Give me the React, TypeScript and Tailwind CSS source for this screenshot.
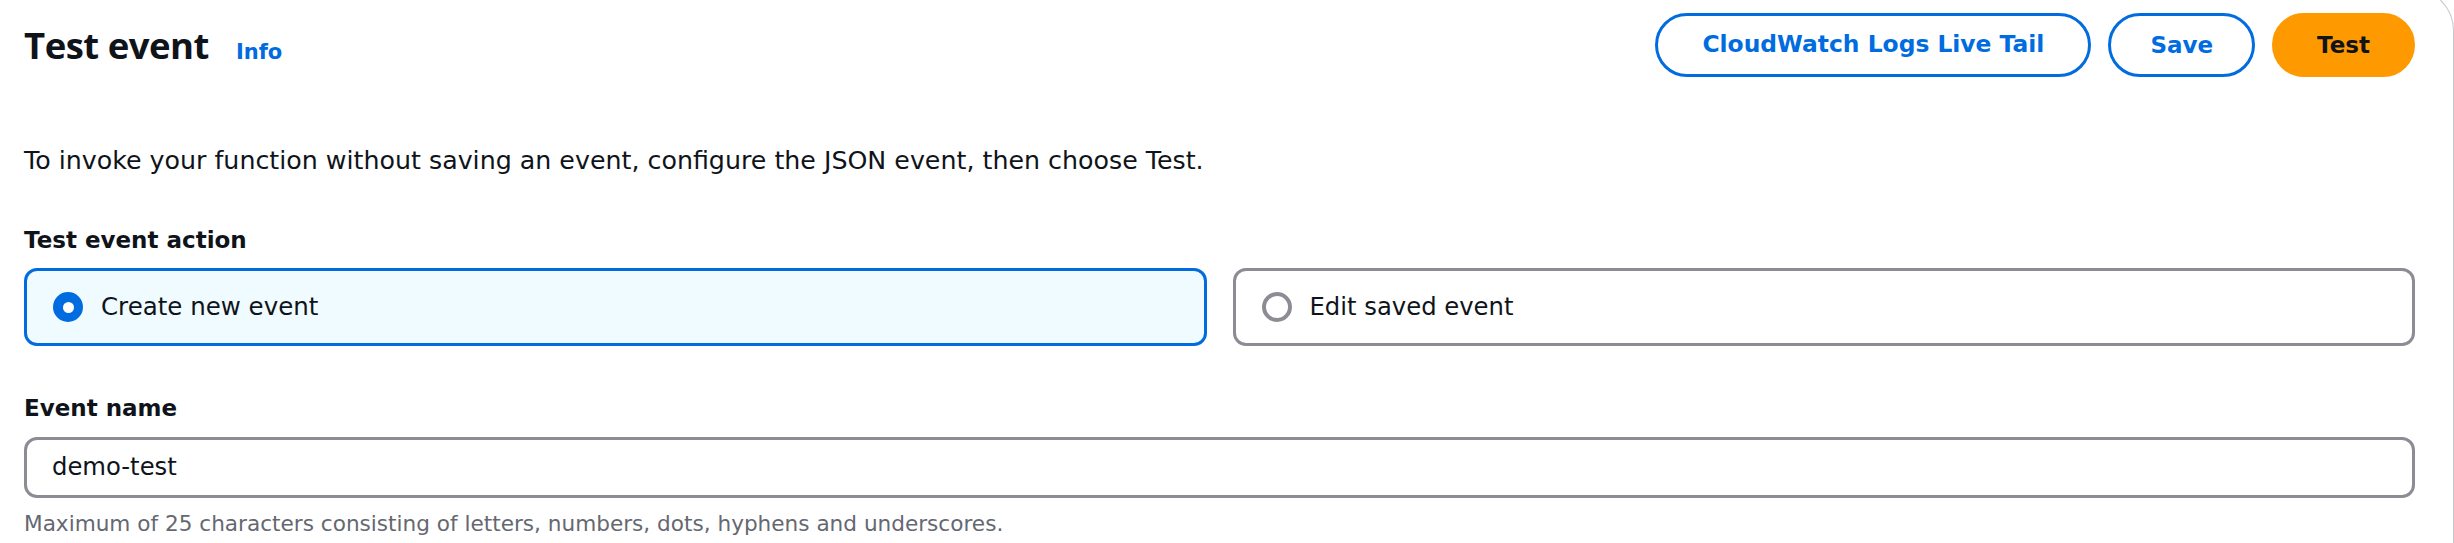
import React from "react";

const body = { fontFamily: '"DejaVu Sans", "Open Sans", Arial, sans-serif' };
const heading = { fontFamily: '"Open Sans", "Noto Sans", Arial, sans-serif' };

function Radio({ checked }: { checked: boolean }) {
  return checked ? (
    <span className="flex h-[30px] w-[30px] shrink-0 items-center justify-center rounded-full bg-[#006ce0]">
      <span className="h-[11px] w-[11px] rounded-full bg-white" />
    </span>
  ) : (
    <span className="h-[30px] w-[30px] shrink-0 rounded-full border-[4px] border-[#8c8c94] bg-white" />
  );
}

export default function App() {
  return (
    <div className="h-[543px] w-full overflow-hidden bg-white" style={body}>
      <div className="mt-[-11px] h-[600px] rounded-tr-[41px] border-r border-t border-[#c6c6cd]">
        <div className="pl-[24px] pr-[38px] pt-[23px]">
          <div className="flex items-center justify-between">
            <div className="flex items-baseline gap-[27px]">
              <h1 className="text-[36.5px] font-bold leading-[64px] tracking-[-0.5px] text-[#0f141a]" style={heading}>
                Test event
              </h1>
              <a className="text-[21px] font-bold text-[#006ce0]">Info</a>
            </div>
            <div className="flex items-center gap-[17px]">
              <button className="h-[64px] rounded-full border-[3px] border-[#006ce0] px-[44px] text-[23.4px] font-bold text-[#006ce0]">
                CloudWatch Logs Live Tail
              </button>
              <button className="h-[64px] rounded-full border-[3px] border-[#006ce0] px-[39px] text-[23px] font-bold text-[#006ce0]">
                Save
              </button>
              <button className="h-[64px] rounded-full border-[3px] border-[#ff9900] bg-[#ff9900] px-[42px] text-[23px] font-bold text-[#0f141a]">
                Test
              </button>
            </div>
          </div>

          <p className="mt-[68px] text-[25.3px] leading-[32px] text-[#0f141a]">
            To invoke your function without saving an event, configure the JSON event, then choose Test.
          </p>

          <div className="mt-[47px] text-[23px] font-bold leading-[32px] text-[#0f141a]">Test event action</div>
          <div className="mt-[12px] grid grid-cols-2 gap-[26px]">
            <div className="flex h-[78px] items-center gap-[18px] rounded-[13px] border-[3px] border-[#006ce0] bg-[#f0fbff] pl-[26px]">
              <Radio checked />
              <span className="text-[24.5px] text-[#0f141a]">Create new event</span>
            </div>
            <div className="flex h-[78px] items-center gap-[18px] rounded-[13px] border-[3px] border-[#8c8c94] bg-white pl-[26px]">
              <Radio checked={false} />
              <span className="text-[24.3px] text-[#0f141a]">Edit saved event</span>
            </div>
          </div>

          <div className="mt-[46px] text-[23px] font-bold leading-[32px] text-[#0f141a]">Event name</div>
          <div className="mt-[13px] flex h-[61px] items-center rounded-[13px] border-[3px] border-[#8c8c94] bg-white pl-[25px]">
            <span className="text-[24.3px] text-[#0f141a]">demo-test</span>
          </div>
          <p className="mt-[12px] text-[21.6px] leading-[28px] text-[#656871]">
            Maximum of 25 characters consisting of letters, numbers, dots, hyphens and underscores.
          </p>
        </div>
      </div>
    </div>
  );
}
